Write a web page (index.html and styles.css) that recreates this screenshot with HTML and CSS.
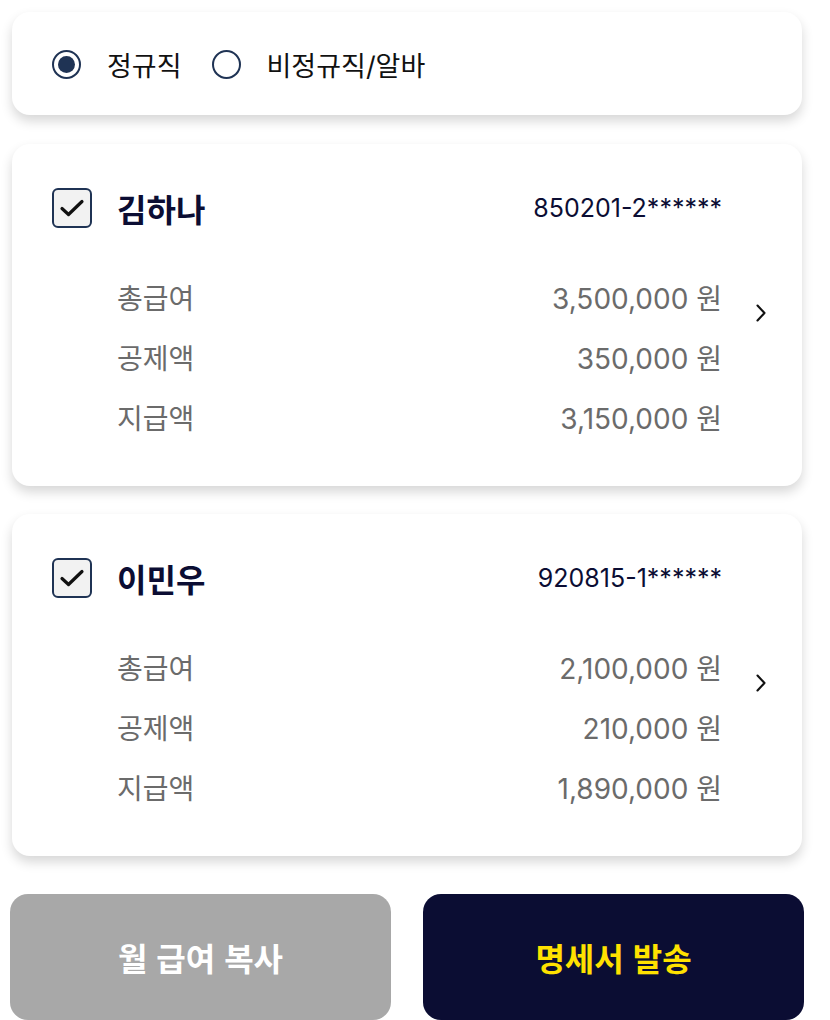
FILE: index.html
```html
<!DOCTYPE html>
<html lang="ko">
<head>
    <meta charset="UTF-8">
    <meta name="viewport" content="width=device-width, initial-scale=1.0">
    <title>급여 명세서</title>
    <link rel="stylesheet" href="styles.css">
</head>
<body>
    <div class="type-card">
        <label class="radio">
            <span class="radio-dot checked"></span>
            <span>정규직</span>
        </label>
        <label class="radio">
            <span class="radio-dot"></span>
            <span>비정규직/알바</span>
        </label>
    </div>

    <div class="pay-card">
        <div class="pay-head">
            <span class="check">
                <svg width="26" height="20" viewBox="0 0 26 20"><path d="M3 10.5 L9.5 16.5 L23 3.5" fill="none" stroke="#111" stroke-width="3.2" stroke-linecap="round" stroke-linejoin="round"/></svg>
            </span>
            <span class="name">김하나</span>
            <span class="rrn">850201-2******</span>
        </div>
        <div class="pay-rows">
            <div class="pay-row"><span>총급여</span><span>3,500,000 원</span></div>
            <div class="pay-row"><span>공제액</span><span>350,000 원</span></div>
            <div class="pay-row"><span>지급액</span><span>3,150,000 원</span></div>
        </div>
        <svg class="chevron" width="12" height="20" viewBox="0 0 12 20"><path d="M2.5 2.5 L9.5 10 L2.5 17.5" fill="none" stroke="#111" stroke-width="2.1" stroke-linecap="round" stroke-linejoin="round"/></svg>
    </div>

    <div class="pay-card">
        <div class="pay-head">
            <span class="check">
                <svg width="26" height="20" viewBox="0 0 26 20"><path d="M3 10.5 L9.5 16.5 L23 3.5" fill="none" stroke="#111" stroke-width="3.2" stroke-linecap="round" stroke-linejoin="round"/></svg>
            </span>
            <span class="name">이민우</span>
            <span class="rrn">920815-1******</span>
        </div>
        <div class="pay-rows">
            <div class="pay-row"><span>총급여</span><span>2,100,000 원</span></div>
            <div class="pay-row"><span>공제액</span><span>210,000 원</span></div>
            <div class="pay-row"><span>지급액</span><span>1,890,000 원</span></div>
        </div>
        <svg class="chevron" width="12" height="20" viewBox="0 0 12 20"><path d="M2.5 2.5 L9.5 10 L2.5 17.5" fill="none" stroke="#111" stroke-width="2.1" stroke-linecap="round" stroke-linejoin="round"/></svg>
    </div>

    <div class="actions">
        <button class="btn btn-copy">월 급여 복사</button>
        <button class="btn btn-send">명세서 발송</button>
    </div>
</body>
</html>
```

FILE: styles.css
```css
body {
    margin: 0;
    padding: 12px 28px 0 12px;
    background: #ffffff;
    font-family: 'Inter', 'Noto Sans CJK KR', sans-serif;
    color: #111111;
}
.type-card,
.pay-card {
    background: #ffffff;
    border-radius: 18px;
    box-shadow: 0 6px 12px rgba(0, 0, 0, 0.16);
}
.type-card {
    height: 103px;
    box-sizing: border-box;
    padding: 0 40px;
    display: flex;
    align-items: center;
    gap: 30px;
}
.radio {
    display: flex;
    align-items: center;
    gap: 26px;
    font-size: 27px;
    color: #111111;
    padding-top: 2px;
}
.radio-dot {
    width: 29px;
    height: 29px;
    box-sizing: border-box;
    border: 2px solid #1f3354;
    border-radius: 50%;
    display: flex;
    align-items: center;
    justify-content: center;
}
.radio-dot.checked::after {
    content: '';
    width: 17px;
    height: 17px;
    border-radius: 50%;
    background: #1f3354;
}
.pay-card {
    position: relative;
    margin-top: 29px;
    padding: 44px 80px 39px 40px;
}
.pay-card + .pay-card {
    margin-top: 28px;
}
.pay-head {
    display: flex;
    align-items: center;
    height: 40px;
}
.check {
    width: 40px;
    height: 40px;
    box-sizing: border-box;
    border: 2px solid #1f3354;
    border-radius: 6px;
    background: #f2f2f2;
    display: flex;
    align-items: center;
    justify-content: center;
}
.name {
    margin-left: 25px;
    font-size: 32px;
    font-weight: 700;
    color: #0b0d33;
}
.rrn {
    margin-left: auto;
    font-size: 25px;
    color: #0b0d33;
}
.pay-rows {
    margin-top: 39px;
    padding-left: 65px;
}
.pay-row {
    display: flex;
    justify-content: space-between;
    align-items: center;
    height: 60px;
    font-size: 28px;
    color: #6b6b6b;
}
.chevron {
    position: absolute;
    top: 159px;
    right: 35px;
}
.actions {
    display: grid;
    grid-template-columns: 1fr 1fr;
    gap: 32px;
    margin: 38px -2px 0 -2px;
}
.btn {
    height: 126px;
    border: none;
    border-radius: 18px;
    font-family: 'Noto Sans CJK KR', sans-serif;
    font-size: 32px;
    font-weight: 700;
    cursor: pointer;
}
.btn-copy {
    background: #a8a8a8;
    color: #ffffff;
}
.btn-send {
    background: #0b0d33;
    color: #ffe100;
}
```
